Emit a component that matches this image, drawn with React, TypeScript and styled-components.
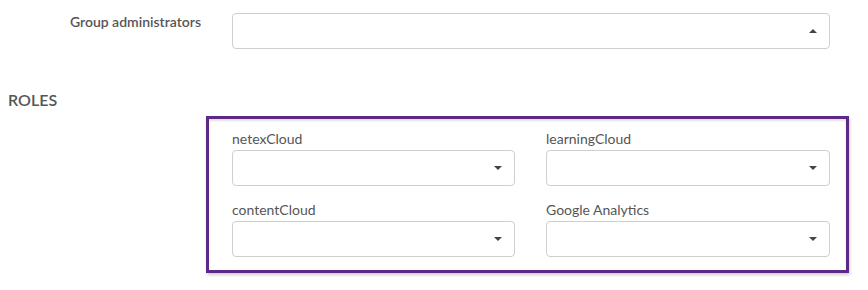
import React from "react";
import styled, { createGlobalStyle } from "styled-components";

const Global = createGlobalStyle`
  html, body { margin: 0; padding: 0; background: #fff; }
  body { font-family: Lato, "Open Sans", "Liberation Sans", sans-serif; color: #555; }
  * { box-sizing: border-box; }
`;

const Page = styled.div`
  width: 868px;
  height: 290px;
  padding: 13px 0 0 8px;
`;

const FieldRow = styled.div`
  display: grid;
  grid-template-columns: 224px 598px;
  align-items: start;
`;

const RowLabel = styled.label`
  font-size: 14px;
  font-weight: 600;
  color: #555;
  text-align: right;
  padding-right: 31px;
  line-height: 18px;
`;

const Section = styled.h3`
  margin: 41px 0 0 0;
  font-size: 16px;
  font-weight: 600;
  color: #555;
  line-height: 20px;
`;

const Card = styled.div`
  margin: 6px 0 0 198px;
  width: 643px;
  border: 3px solid #5c2a85;
  background: #fff;
  padding: 10px 16px 13px 23px;
  display: grid;
  grid-template-columns: 283px 284px;
  column-gap: 31px;
  row-gap: 14px;
  box-shadow: inset 0 2px 2px rgba(0, 0, 0, 0.12), 1px 2px 3px rgba(0, 0, 0, 0.2);
`;

const Field = styled.div`
  display: flex;
  flex-direction: column;
`;

const FieldLabel = styled.label`
  font-size: 14px;
  color: #555;
  line-height: 20px;
  margin-bottom: 1px;
`;

const SelectBox = styled.div`
  height: 36px;
  border: 1px solid #cfcfcf;
  border-radius: 4px;
  background: #fff;
  display: flex;
  align-items: center;
  justify-content: flex-end;
  padding-right: 12px;
`;

const Caret = styled.span<{ $up?: boolean }>`
  width: 0;
  height: 0;
  border-left: 4px solid transparent;
  border-right: 4px solid transparent;
  ${(p) => (p.$up ? "border-bottom: 4px solid #444;" : "border-top: 4px solid #444;")}
`;

const roles = ["netexCloud", "learningCloud", "contentCloud", "Google Analytics"];

export default function App() {
  return (
    <Page>
      <Global />
      <FieldRow>
        <RowLabel>Group administrators</RowLabel>
        <SelectBox>
          <Caret $up />
        </SelectBox>
      </FieldRow>
      <Section>ROLES</Section>
      <Card>
        {roles.map((r) => (
          <Field key={r}>
            <FieldLabel>{r}</FieldLabel>
            <SelectBox>
              <Caret />
            </SelectBox>
          </Field>
        ))}
      </Card>
    </Page>
  );
}
